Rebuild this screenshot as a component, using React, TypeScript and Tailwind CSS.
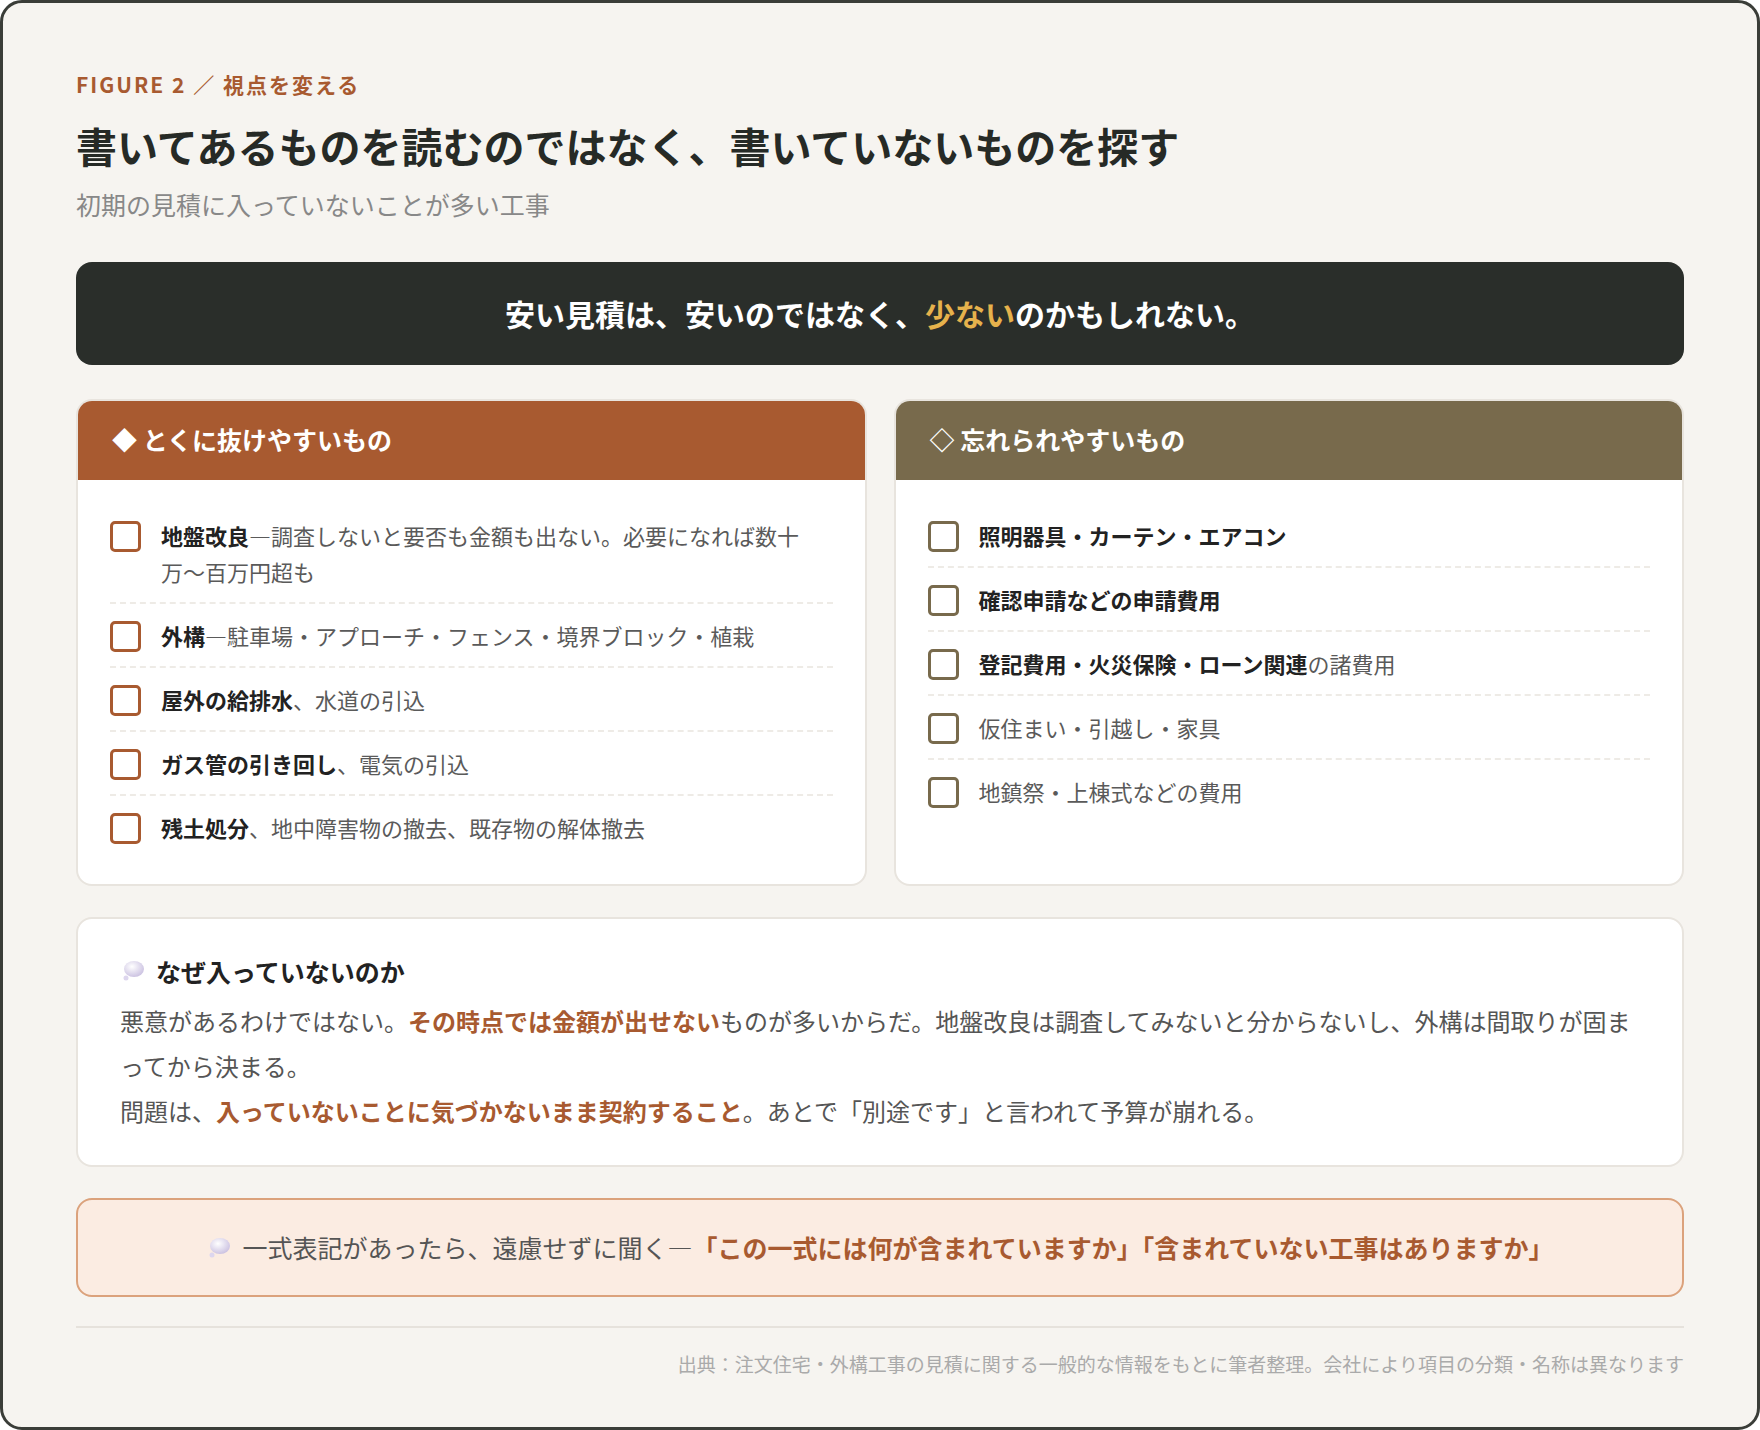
const font = { fontFamily: '"Noto Sans CJK JP", "Noto Sans", sans-serif' };

type Item = { b?: string; t?: string };

const left: Item[] = [
  { b: "地盤改良", t: "―調査しないと要否も金額も出ない。必要になれば数十万〜百万円超も" },
  { b: "外構", t: "―駐車場・アプローチ・フェンス・境界ブロック・植栽" },
  { b: "屋外の給排水", t: "、水道の引込" },
  { b: "ガス管の引き回し", t: "、電気の引込" },
  { b: "残土処分", t: "、地中障害物の撤去、既存物の解体撤去" },
];

const right: Item[] = [
  { b: "照明器具・カーテン・エアコン" },
  { b: "確認申請などの申請費用" },
  { b: "登記費用・火災保険・ローン関連", t: "の諸費用" },
  { t: "仮住まい・引越し・家具" },
  { t: "地鎮祭・上棟式などの費用" },
];

function Bubble() {
  return (
    <svg width="26" height="24" viewBox="0 0 26 24" className="shrink-0">
      <defs>
        <radialGradient id="bg1" cx="0.4" cy="0.35" r="0.7">
          <stop offset="0" stopColor="#ffffff" />
          <stop offset="1" stopColor="#c9bfe0" />
        </radialGradient>
      </defs>
      <ellipse cx="14" cy="10" rx="10" ry="8" fill="url(#bg1)" />
      <circle cx="6" cy="19" r="2.5" fill="#ddd6ee" />
    </svg>
  );
}

function Card({ title, color, box, items }: { title: string; color: string; box: string; items: Item[] }) {
  return (
    <div className="flex-1 bg-white rounded-[16px] border-2 border-[#e8e4de] overflow-hidden">
      <div className={`h-[79px] flex items-center px-[34px] text-white text-[25px] font-bold ${color}`}>{title}</div>
      <div className="px-[32px] pt-[24px] pb-[26px]">
        {items.map((it, i) => (
          <div
            key={i}
            className={`flex gap-[20px] py-[13px] ${i < items.length - 1 ? "border-b-2 border-dashed border-[#eeebe6]" : ""}`}
          >
            <div className={`w-[31px] h-[31px] mt-[4px] shrink-0 rounded-[5px] border-[3px] ${box}`} />
            <div className="text-[22px] leading-[36px] text-[#5a5a5a]">
              {it.b && <span className="font-bold text-[#222]">{it.b}</span>}
              {it.t}
            </div>
          </div>
        ))}
      </div>
    </div>
  );
}

export default function App() {
  return (
    <div style={font} className="w-[1760px] h-[1430px] bg-white">
      <div className="h-full border-[3px] border-[#3a3d38] rounded-[22px] bg-[#f6f4f0] px-[73px] pt-[66px]">
        <div className="text-[21px] font-bold tracking-[2px] text-[#a85a30]">FIGURE 2 ／ 視点を変える</div>
        <h1 className="mt-[14px] text-[41px] font-bold text-[#262a26]">書いてあるものを読むのではなく、書いていないものを探す</h1>
        <div className="mt-[10px] text-[25px] text-[#888]">初期の見積に入っていないことが多い工事</div>

        <div className="mt-[38px] h-[103px] rounded-[16px] bg-[#2a2e2a] flex items-center justify-center text-[30px] font-bold text-white">
          安い見積は、安いのではなく、<span className="text-[#e6b24c]">少ない</span>のかもしれない。
        </div>

        <div className="mt-[34px] flex gap-[27px]">
          <Card title="◆ とくに抜けやすいもの" color="bg-[#a85a30]" box="border-[#a85a30]" items={left} />
          <Card title="◇ 忘れられやすいもの" color="bg-[#786a4c]" box="border-[#786a4c]" items={right} />
        </div>

        <div className="mt-[31px] bg-white rounded-[16px] border-2 border-[#e8e4de] px-[42px] pt-[34px] pb-[32px]">
          <div className="flex items-center gap-[10px] text-[25px] font-bold text-[#222]">
            <Bubble />
            なぜ入っていないのか
          </div>
          <div className="mt-[8px] text-[24px] leading-[45px] text-[#555]">
            <p>
              悪意があるわけではない。<span className="font-bold text-[#a85a30]">その時点では金額が出せない</span>
              ものが多いからだ。地盤改良は調査してみないと分からないし、外構は間取りが固まってから決まる。
            </p>
            <p>
              問題は、<span className="font-bold text-[#a85a30]">入っていないことに気づかないまま契約すること</span>
              。あとで「別途です」と言われて予算が崩れる。
            </p>
          </div>
        </div>

        <div className="mt-[31px] h-[99px] rounded-[16px] border-2 border-[#dba27c] bg-[#fbece2] flex items-center justify-center gap-[10px] text-[25px] text-[#555]">
          <Bubble />
          <span>
            一式表記があったら、遠慮せずに聞く―
            <span className="font-bold text-[#a85a30]">「この一式には何が含まれていますか」「含まれていない工事はありますか」</span>
          </span>
        </div>

        <div className="mt-[29px] border-t-2 border-[#e6e2dc] pt-[22px] text-right text-[19px] text-[#aaa]">
          出典：注文住宅・外構工事の見積に関する一般的な情報をもとに筆者整理。会社により項目の分類・名称は異なります
        </div>
      </div>
    </div>
  );
}
